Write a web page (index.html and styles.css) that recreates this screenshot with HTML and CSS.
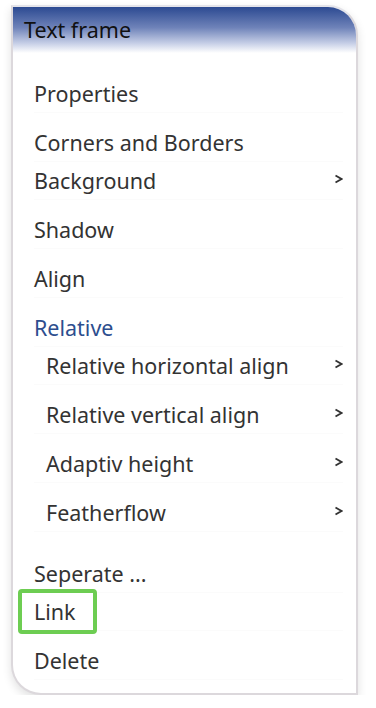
FILE: index.html
```html
<!DOCTYPE html>
<html lang="en">
<head>
  <meta charset="UTF-8" />
  <meta name="viewport" content="width=device-width, initial-scale=1" />
  <title>Text frame</title>
  <link rel="stylesheet" href="styles.css">
</head>
<body>

  <div class="menu">
    <div class="menu-title">Text frame</div>

    <div class="menu-list">
      <div class="item">Properties</div>
      <div class="item gap">Corners and Borders</div>
      <div class="item">Background <svg class="chev" viewBox="0 0 9 10"><polyline points="1.5,1.5 7.5,5 1.5,8.5" /></svg></div>
      <div class="item gap">Shadow</div>
      <div class="item gap">Align</div>
      <div class="item gap section">Relative</div>
      <div class="item sub">Relative horizontal align <svg class="chev" viewBox="0 0 9 10"><polyline points="1.5,1.5 7.5,5 1.5,8.5" /></svg></div>
      <div class="item sub gap">Relative vertical align <svg class="chev" viewBox="0 0 9 10"><polyline points="1.5,1.5 7.5,5 1.5,8.5" /></svg></div>
      <div class="item sub gap">Adaptiv height <svg class="chev" viewBox="0 0 9 10"><polyline points="1.5,1.5 7.5,5 1.5,8.5" /></svg></div>
      <div class="item sub gap">Featherflow <svg class="chev" viewBox="0 0 9 10"><polyline points="1.5,1.5 7.5,5 1.5,8.5" /></svg></div>
      <div class="item gap-lg">Seperate ...</div>
      <div class="item"><span class="highlight">Link</span></div>
      <div class="item gap">Delete</div>
    </div>
  </div>

</body>
</html>
```

FILE: styles.css
```css
* { margin: 0; padding: 0; box-sizing: border-box; }

body {
  font-family: 'Noto Sans', 'Open Sans', sans-serif;
  background: #fff;
  color: #333;
}

.menu {
  margin: 5px 0 0 11px;
  width: 347px;
  height: 690px;
  background: #fff;
  border: 2px solid #dcd8dc;
  border-top-color: #e4e4ea;
  border-radius: 0 30px 0 30px;
  box-shadow: 0 4px 10px rgba(0, 0, 0, 0.12);
  overflow: hidden;
}

.menu-title {
  height: 46px;
  padding: 8px 0 0 11px;
  font-size: 21.5px;
  color: #111;
  background: linear-gradient(to bottom, #2c4a92 0%, #6f83b9 45%, #c9d1e8 80%, #fff 100%);
}

.menu-list {
  padding: 22px 13px 0 21px;
}

.item {
  display: flex;
  align-items: center;
  justify-content: space-between;
  height: 38px;
  font-size: 21.5px;
  border-bottom: 1px solid #fbfbfb;
}

.gap { margin-top: 11px; }
.gap-lg { margin-top: 23px; }

.section { color: #2d4e8e; }
.sub { padding-left: 12px; }

.chev {
  width: 9px;
  height: 10px;
  margin-top: -3px;
  fill: none;
  stroke: #333;
  stroke-width: 1.8;
}

.highlight {
  display: flex;
  align-items: center;
  width: 79px;
  height: 45px;
  margin-left: -16px;
  padding-left: 12px;
  border: 4px solid #6dcd52;
  border-radius: 4px;
}
```
